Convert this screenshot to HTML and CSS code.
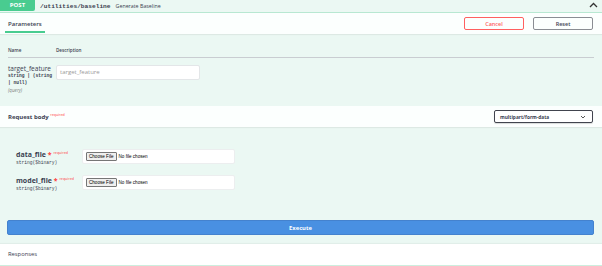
FILE: index.html
```html
<!DOCTYPE html>
<html lang="en">
<head>
    <meta charset="UTF-8">
    <meta name="viewport" content="width=device-width, initial-scale=1.0">
    <title>POST /utilities/baseline</title>
    <link rel="stylesheet" href="styles.css">
</head>
<body>
    <div class="opblock">
        <!-- Summary -->
        <div class="summary">
            <span class="method">POST</span>
            <span class="path">/utilities/baseline</span>
            <span class="summary-desc">Generate Baseline</span>
            <svg class="arrow" width="9" height="6" viewBox="0 0 9 6">
                <path d="M1 5 L4.5 1.5 L8 5" fill="none" stroke="#333" stroke-width="1.3"/>
            </svg>
        </div>

        <!-- Parameters -->
        <div class="section-header">
            <div class="tab">Parameters</div>
            <div class="header-buttons">
                <button class="btn cancel">Cancel</button>
                <button class="btn reset">Reset</button>
            </div>
        </div>

        <div class="params">
            <div class="params-head">
                <span class="col-name">Name</span>
                <span>Description</span>
            </div>
            <div class="param-row">
                <div class="col-name">
                    <div class="param-name">target_feature</div>
                    <div class="param-type">string | (string<br>| null)</div>
                    <div class="param-in">(query)</div>
                </div>
                <div class="text-input">target_feature</div>
            </div>
        </div>

        <!-- Request body -->
        <div class="section-header body-header">
            <div class="body-title">Request body <sup class="req">required</sup></div>
            <div class="select">
                <span>multipart/form-data</span>
                <svg width="6" height="4" viewBox="0 0 6 4">
                    <path d="M1 1 L3 3 L5 1" fill="none" stroke="#444" stroke-width="0.9"/>
                </svg>
            </div>
        </div>

        <div class="body">
            <div class="file-row">
                <div class="file-label">
                    <div class="file-name">data_file <span class="star">*</span> <sup class="req">required</sup></div>
                    <div class="file-type">string($binary)</div>
                </div>
                <div class="file-box">
                    <span class="choose">Choose File</span>
                    <span class="no-file">No file chosen</span>
                </div>
            </div>
            <div class="file-row">
                <div class="file-label">
                    <div class="file-name">model_file <span class="star">*</span> <sup class="req">required</sup></div>
                    <div class="file-type">string($binary)</div>
                </div>
                <div class="file-box">
                    <span class="choose">Choose File</span>
                    <span class="no-file">No file chosen</span>
                </div>
            </div>
            <button class="execute">Execute</button>
        </div>

        <!-- Responses -->
        <div class="responses">Responses</div>
    </div>
</body>
</html>
```

FILE: styles.css
```css
body {
    margin: 0;
    padding: 0;
    font-family: 'Open Sans', sans-serif;
    color: #3b4151;
    background-color: #fff;
}

.opblock {
    background-color: #ebf8f3;
    border-bottom: 1px solid #cdeede;
}

.summary {
    display: flex;
    align-items: center;
    height: 12px;
    border-bottom: 1px solid #b8e8d2;
}

.method {
    background-color: #49cc90;
    color: #fff;
    font-size: 6px;
    font-weight: 700;
    width: 35px;
    height: 11px;
    line-height: 11px;
    text-align: center;
    align-self: flex-start;
    border-radius: 0 0 2px 0;
}

.path {
    font-family: 'Liberation Mono', monospace;
    font-weight: 700;
    font-size: 6.2px;
    margin-left: 5px;
    color: #3b4151;
}

.summary-desc {
    font-size: 5.3px;
    margin-left: 5px;
    color: #3b4151;
}

.arrow {
    margin-left: auto;
    margin-right: 4px;
    margin-top: -3px;
}

.section-header {
    display: flex;
    align-items: center;
    justify-content: space-between;
    height: 21px;
    background-color: #fcfffe;
    box-shadow: 0 1px 1px rgba(0, 0, 0, 0.06);
    padding: 0 9px 0 5px;
}

.tab {
    font-size: 6px;
    font-weight: 600;
    padding: 0 3px;
    line-height: 22px;
    box-sizing: border-box;
    border-bottom: 2px solid #49cc90;
    height: 20px;
    align-self: flex-start;
}

.header-buttons {
    display: flex;
    gap: 9px;
}

.btn {
    width: 60px;
    height: 13px;
    background: transparent;
    border-radius: 2px;
    font-family: 'Open Sans', sans-serif;
    font-size: 5.5px;
    font-weight: 600;
    padding: 0;
}

.cancel {
    border: 1px solid #ff6060;
    color: #ff6060;
}

.reset {
    border: 1px solid #8a8d93;
    color: #3b4151;
}

.params {
    padding: 13px 8px 11px 8px;
}

.params-head {
    display: flex;
    font-size: 4.6px;
    font-weight: 600;
    line-height: 6px;
    padding-bottom: 4px;
    border-bottom: 1px solid #c9cdd1;
}

.col-name {
    width: 48px;
    flex-shrink: 0;
}

.param-row {
    display: flex;
    padding-top: 6px;
}

.param-name {
    font-size: 6.5px;
    line-height: 8px;
    margin-top: 1px;
}

.param-type {
    font-family: 'Liberation Mono', monospace;
    font-size: 4.6px;
    font-weight: 700;
    line-height: 6.5px;
}

.param-in {
    font-size: 4.6px;
    font-style: italic;
    color: #808080;
    line-height: 9px;
}

.text-input {
    width: 139px;
    height: 13px;
    margin-top: 1px;
    background-color: #fff;
    border: 1px solid #e3e6e8;
    border-radius: 2px;
    font-size: 6px;
    line-height: 13px;
    color: #9a9a9a;
    padding-left: 3px;
}

.body-header {
    height: 21px;
    padding: 0 9px 0 8px;
}

.body-title {
    font-size: 6px;
    font-weight: 700;
}

.req {
    color: #ff3b3b;
    font-size: 3.6px;
    font-weight: 400;
    vertical-align: 3px;
}

.select {
    width: 86px;
    height: 11px;
    border: 1px solid #41444e;
    border-radius: 2px;
    background-color: #fff;
    box-shadow: 0 1px 1px rgba(0, 0, 0, 0.15);
    display: flex;
    align-items: center;
    justify-content: space-between;
    padding: 0 6px 0 5px;
    font-size: 4.8px;
    font-weight: 700;
}

.body {
    padding: 22px 8px 9px 7px;
}

.file-row {
    display: flex;
    align-items: flex-start;
    height: 15px;
    margin-bottom: 11px;
}

.file-label {
    width: 66px;
    padding-left: 9px;
    flex-shrink: 0;
}

.file-name {
    font-size: 7px;
    font-weight: 700;
    line-height: 8px;
}

.star {
    color: #ff3b3b;
}

.file-type {
    font-family: 'Liberation Mono', monospace;
    font-size: 4.6px;
    line-height: 7px;
}

.file-box {
    width: 148px;
    height: 13px;
    background-color: #fff;
    border: 1px solid #eceeef;
    border-radius: 2px;
    display: flex;
    align-items: center;
    padding-left: 3px;
    gap: 2px;
}

.choose {
    font-family: 'Liberation Sans', sans-serif;
    font-size: 4.6px;
    color: #000;
    background-color: #efefef;
    border: 1px solid #767676;
    border-radius: 1px;
    padding: 0 2px;
    height: 7px;
    line-height: 7px;
}

.no-file {
    font-family: 'Liberation Sans', sans-serif;
    font-size: 4.6px;
    color: #000;
}

.execute {
    display: block;
    width: 100%;
    height: 15px;
    margin-top: 30px;
    background-color: #4990e2;
    border: 1px solid #4482ce;
    border-radius: 2px;
    color: #fff;
    font-family: 'Open Sans', sans-serif;
    font-size: 5.8px;
    font-weight: 700;
    padding: 0;
}

.responses {
    height: 21px;
    line-height: 21px;
    background-color: #fff;
    font-size: 5.8px;
    padding-left: 8px;
    box-shadow: 0 -1px 1px rgba(0, 0, 0, 0.04);
}
```
